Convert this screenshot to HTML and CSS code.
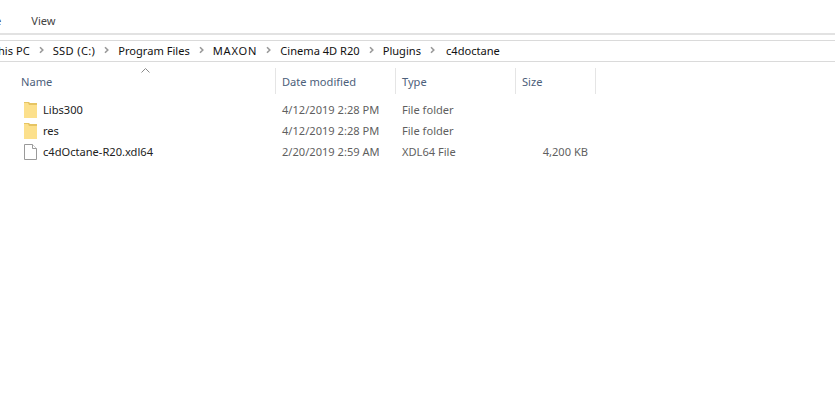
FILE: index.html
```html
<!DOCTYPE html>
<html lang="en">
<head>
    <meta charset="UTF-8">
    <title>c4doctane</title>
    <link rel="stylesheet" href="styles.css">
</head>
<body>
    <div class="ribbon">
        <span class="tab-cut">e</span>
        <span class="tab">View</span>
    </div>
    <div class="address">
        <span class="crumb crumb-first">his PC</span>
        <svg class="chevron" viewBox="0 0 5 8"><path d="M1 1.2l2.8 2.8-2.8 2.8"/></svg>
        <span class="crumb crumb-ssd">SSD (C:)</span>
        <svg class="chevron" viewBox="0 0 5 8"><path d="M1 1.2l2.8 2.8-2.8 2.8"/></svg>
        <span class="crumb">Program Files</span>
        <svg class="chevron" viewBox="0 0 5 8"><path d="M1 1.2l2.8 2.8-2.8 2.8"/></svg>
        <span class="crumb crumb-maxon">MAXON</span>
        <svg class="chevron" viewBox="0 0 5 8"><path d="M1 1.2l2.8 2.8-2.8 2.8"/></svg>
        <span class="crumb">Cinema 4D R20</span>
        <svg class="chevron" viewBox="0 0 5 8"><path d="M1 1.2l2.8 2.8-2.8 2.8"/></svg>
        <span class="crumb">Plugins</span>
        <svg class="chevron" viewBox="0 0 5 8"><path d="M1 1.2l2.8 2.8-2.8 2.8"/></svg>
        <span class="crumb crumb-last">c4doctane</span>
    </div>
    <div class="list">
        <div class="row header">
            <div class="col col-name">Name
                <svg class="sort" viewBox="0 0 9 5"><path d="M.5 4.5l4-4 4 4"/></svg>
            </div>
            <div class="col col-date">Date modified</div>
            <div class="col col-type">Type</div>
            <div class="col col-size">Size</div>
        </div>
        <div class="rows">
            <div class="row item">
                <div class="col col-name">
                    <svg class="icon" viewBox="0 0 13 16"><path class="folder-back" d="M0 0h5l1 1h7v15H0z"/><path class="folder-front" d="M5 3h8v13H0V1h4z"/></svg>
                    <span class="file-name">Libs300</span>
                </div>
                <div class="col col-date">4/12/2019 2:28 PM</div>
                <div class="col col-type">File folder</div>
                <div class="col col-size"></div>
            </div>
            <div class="row item">
                <div class="col col-name">
                    <svg class="icon" viewBox="0 0 13 16"><path class="folder-back" d="M0 0h5l1 1h7v15H0z"/><path class="folder-front" d="M5 3h8v13H0V1h4z"/></svg>
                    <span class="file-name">res</span>
                </div>
                <div class="col col-date">4/12/2019 2:28 PM</div>
                <div class="col col-type">File folder</div>
                <div class="col col-size"></div>
            </div>
            <div class="row item">
                <div class="col col-name">
                    <svg class="icon" viewBox="0 0 13 16"><path class="page" d="M.5.5h8l4 4v11H.5z"/><path class="page" d="M8.5.5v4h4"/></svg>
                    <span class="file-name">c4dOctane-R20.xdl64</span>
                </div>
                <div class="col col-date">2/20/2019 2:59 AM</div>
                <div class="col col-type">XDL64 File</div>
                <div class="col col-size">4,200 KB</div>
            </div>
        </div>
    </div>
</body>
</html>
```

FILE: styles.css
```css
body {
    margin: 0;
    height: 401px;
    overflow: hidden;
    background-color: #fff;
    color: #222;
    font-family: 'Noto Sans', 'Open Sans', sans-serif;
    font-size: 11.1px;
}

.ribbon {
    display: flex;
    align-items: center;
    height: 35px;
    padding-top: 8px;
    box-sizing: border-box;
    border-bottom: 2px solid #e2e2e2;
    overflow: hidden;
}

.tab-cut {
    margin-left: -5px;
    color: #444;
}

.tab {
    margin-left: 30px;
    color: #444;
}

.address {
    display: flex;
    align-items: center;
    height: 22px;
    margin-top: 5px;
    padding-bottom: 2px;
    box-sizing: border-box;
    border-top: 1px solid #dadada;
    border-bottom: 1px solid #dadada;
    overflow: hidden;
    color: #111;
}

.crumb-first {
    margin-left: -2px;
}

.crumb-ssd {
    letter-spacing: .35px;
}

.crumb-maxon {
    letter-spacing: .8px;
}

.crumb-last {
    margin-left: 2px;
}

.chevron {
    width: 5px;
    height: 8px;
    margin: 0 9px;
    fill: none;
    stroke: #999;
    stroke-width: 1.6;
}

.list {
    margin-top: 6px;
}

.row {
    display: flex;
}

.header {
    height: 26px;
    color: #4c607a;
}

.header .col {
    display: flex;
    align-items: center;
    position: relative;
    border-right: 1px solid #e5e5e5;
    padding-left: 6px;
}

.col {
    box-sizing: border-box;
    flex-shrink: 0;
}

.col-name {
    width: 276px;
    padding-left: 21px;
}

.header .col-name {
    padding-left: 21px;
}

.col-date {
    width: 120px;
    padding-left: 6px;
}

.col-type {
    width: 120px;
    padding-left: 6px;
}

.col-size {
    width: 80px;
    padding-left: 6px;
}

.sort {
    position: absolute;
    left: 141px;
    top: 0;
    width: 9px;
    height: 5px;
    fill: none;
    stroke: #8a8a8a;
}

.rows {
    margin-top: 5px;
}

.item {
    height: 21px;
    align-items: center;
    color: #5f5f5f;
}

.item .col-name {
    display: flex;
    align-items: center;
    color: #222;
    padding-left: 24px;
}

.item .col-size {
    padding-right: 8px;
    text-align: right;
}

.icon {
    width: 13px;
    height: 16px;
    margin-right: 6px;
}

.folder-back {
    fill: #e6c463;
}

.folder-front {
    fill: #fce08c;
}

.page {
    fill: #fff;
    stroke: #9a9a9a;
}
```
